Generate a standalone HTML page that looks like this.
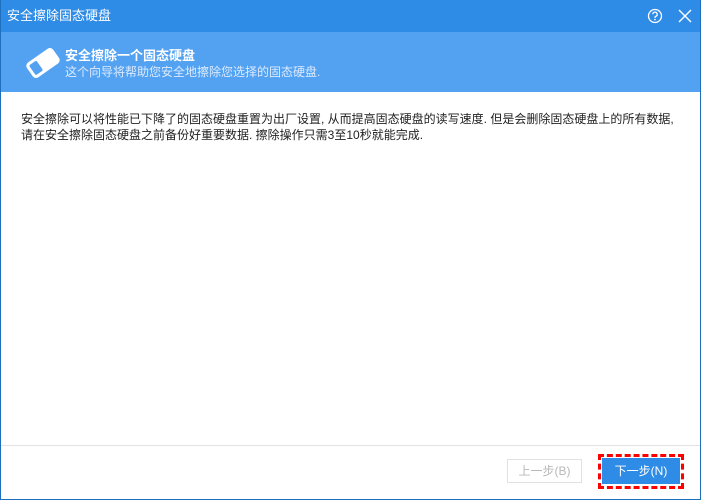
<!DOCTYPE html>
<html><head><meta charset="utf-8"><style>
*{margin:0;padding:0;box-sizing:border-box}
body{width:701px;height:500px;overflow:hidden;background:#fff;font-family:"Liberation Sans","Noto Sans CJK SC",sans-serif;font-size:12px;position:relative}
.win{position:absolute;left:0;top:0;width:701px;height:500px;border:1px solid #1f6fbf;border-top:none}
.title{position:absolute;left:0;top:0;width:701px;height:32px;background:#2e8be6;color:#fff;font-size:13px;line-height:32px;padding-left:7px}
.hdr{position:absolute;left:1px;top:32px;width:699px;height:60px;background:#53a2f2}
.h1{position:absolute;left:64px;top:13px;color:#fff;font-weight:bold;font-size:13px}
.h2{position:absolute;left:64px;top:31px;color:#dceaff;font-size:12px}
.body{position:absolute;left:21px;top:111px;width:665px;line-height:16px;color:#222;font-size:12px}
.sep{position:absolute;left:1px;top:445px;width:699px;height:1px;background:#e3e3e3}
.b1{position:absolute;left:507px;top:459px;width:75px;height:24px;border:1px solid #e2e2e2;color:#b8b8b8;text-align:center;line-height:22px;background:#fff}
.focus{position:absolute;left:598px;top:454px;width:86px;height:35px;border:3px dashed #f00}
.b2{position:absolute;left:602px;top:458px;width:78px;height:26px;background:#2e8be6;color:#fff;text-align:center;line-height:26px}
</style></head><body>
<div class="title">安全擦除固态硬盘</div>
<svg style="position:absolute;left:647px;top:8px" width="16" height="16" viewBox="0 0 16 16"><circle cx="8" cy="8" r="6.5" fill="none" stroke="#fff" stroke-width="1.3"/><path d="M5.8 6.3a2.2 2.2 0 1 1 2.9 2.1c-.5.2-.7.5-.7 1v.6" fill="none" stroke="#fff" stroke-width="1.3"/><circle cx="8" cy="11.6" r=".8" fill="#fff"/></svg>
<svg style="position:absolute;left:678px;top:9px" width="14" height="14" viewBox="0 0 14 14"><path d="M1 1L13 13M13 1L1 13" stroke="#fff" stroke-width="1.4"/></svg>
<div class="hdr">
<svg style="position:absolute;left:25px;top:16px" width="34" height="30" viewBox="0 0 34 30">
<g transform="translate(17 15) rotate(-35)">
<rect x="-15" y="-8" width="30" height="16" rx="3" fill="none" stroke="#fff" stroke-width="2"/>
<path d="M-3 -8H12a3 3 0 0 1 3 3V5a3 3 0 0 1-3 3H-3z" fill="#fff"/>
<path d="M-15 -5a3 3 0 0 1 3-3H-2V8H-12a3 3 0 0 1-3-3z" fill="#fff"/>
<rect x="-13" y="-6" width="9" height="12" rx="1.5" fill="#53a2f2"/>
</g></svg>
<div class="h1">安全擦除一个固态硬盘</div>
<div class="h2">这个向导将帮助您安全地擦除您选择的固态硬盘.</div>
</div>
<div class="body">安全擦除可以将性能已下降了的固态硬盘重置为出厂设置, 从而提高固态硬盘的读写速度. 但是会删除固态硬盘上的所有数据, 请在安全擦除固态硬盘之前备份好重要数据. 擦除操作只需3至10秒就能完成.</div>
<div class="sep"></div>
<div class="b1">上一步(B)</div>
<div class="focus"></div>
<div class="b2">下一步(N)</div>
<div class="win"></div>
</body></html>
